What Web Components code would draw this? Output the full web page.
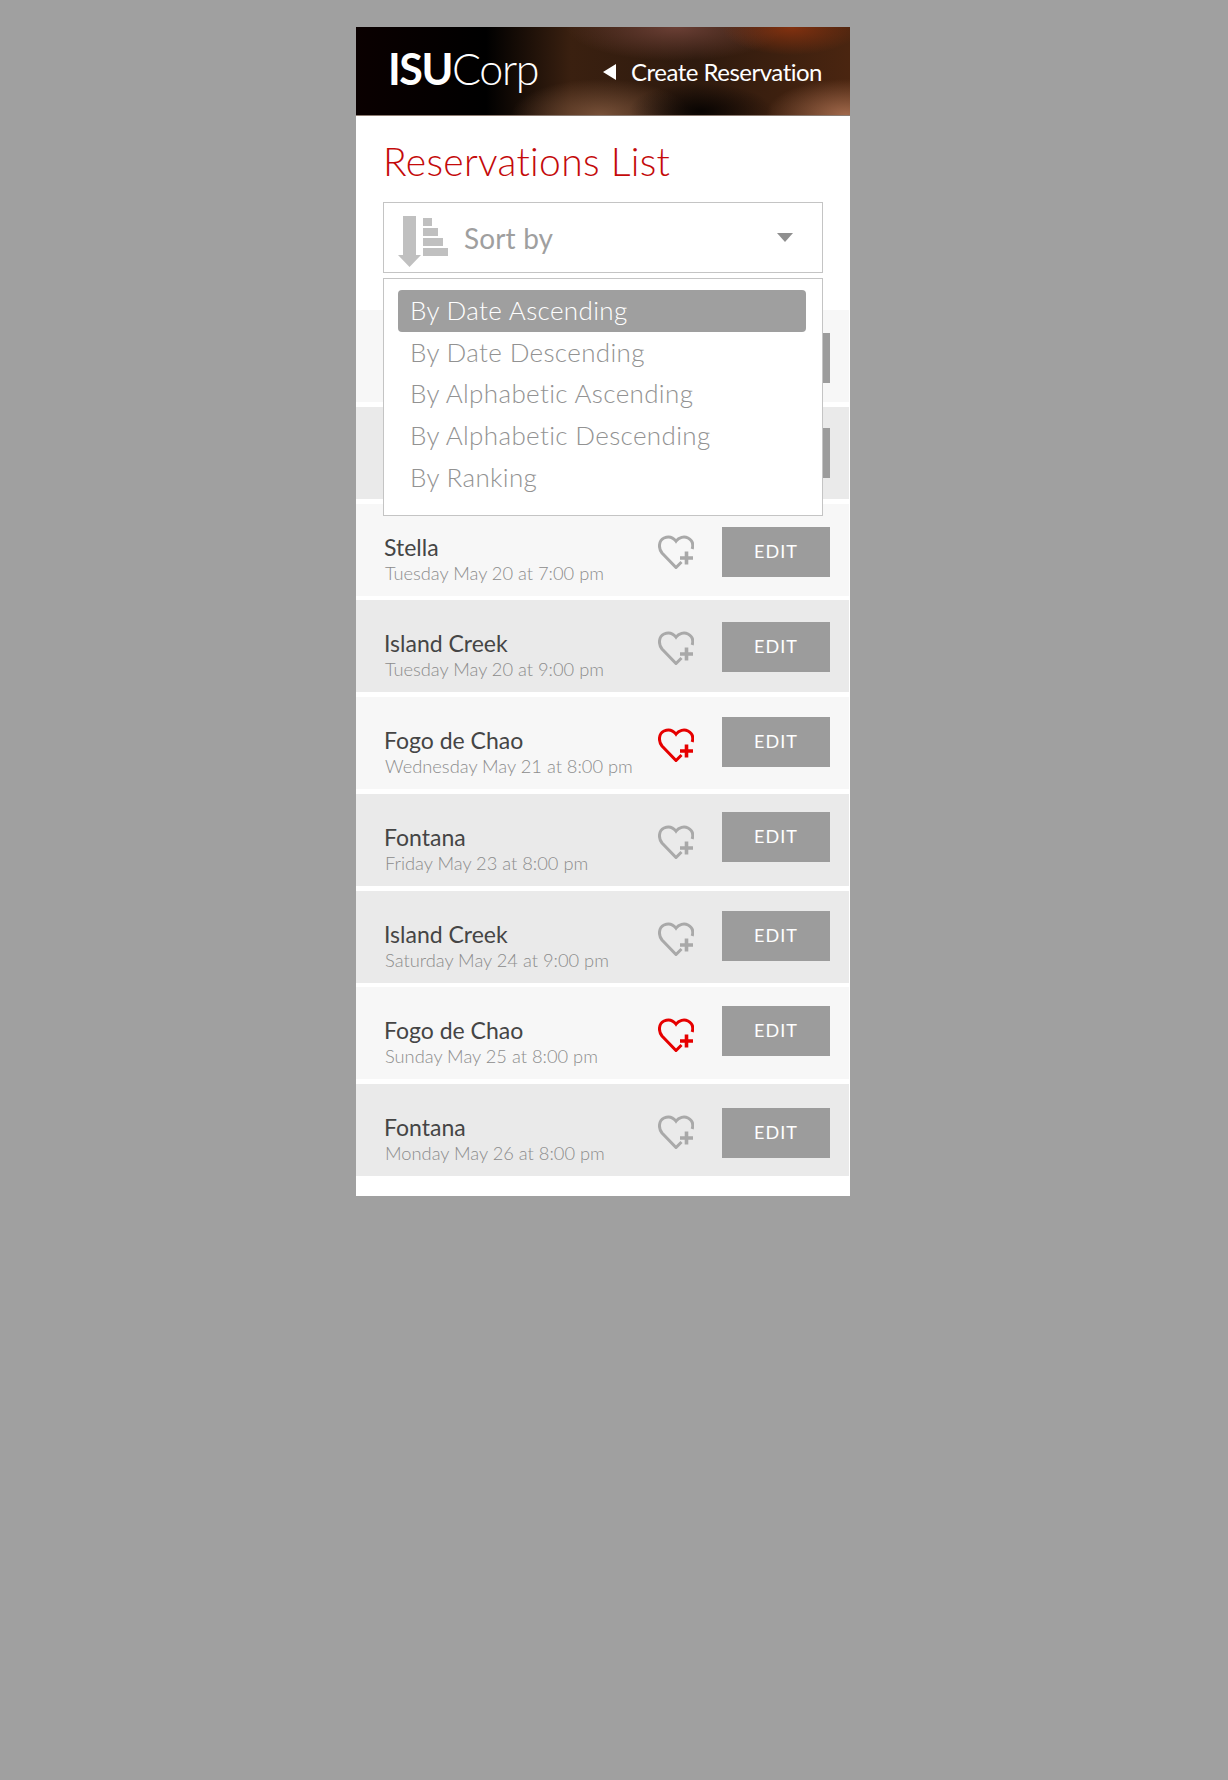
<!DOCTYPE html>
<html>
<head>
<meta charset="utf-8">
<title>Reservations List</title>
<style>
    html, body { margin: 0; background: #a0a0a0; }
    body { min-height: 1780px; font-family: Lato, "Liberation Sans", sans-serif; }
</style>
</head>
<body>
<reservation-screen>
    <app-header slot="header" link="Create Reservation"></app-header>
    <h-title slot="title">Reservations List</h-title>
    <sort-select slot="sort">
        <sort-option selected>By Date Ascending</sort-option>
        <sort-option>By Date Descending</sort-option>
        <sort-option>By Alphabetic Ascending</sort-option>
        <sort-option>By Alphabetic Descending</sort-option>
        <sort-option>By Ranking</sort-option>
    </sort-select>
    <reservation-row btn="23"></reservation-row>
    <reservation-row btn="21" alt></reservation-row>
    <reservation-row btn="23" name="Stella" date="Tuesday May 20 at 7:00 pm"></reservation-row>
    <reservation-row btn="22" alt name="Island Creek" date="Tuesday May 20 at 9:00 pm"></reservation-row>
    <reservation-row btn="20" fav name="Fogo de Chao" date="Wednesday May 21 at 8:00 pm"></reservation-row>
    <reservation-row btn="18" alt name="Fontana" date="Friday May 23 at 8:00 pm"></reservation-row>
    <reservation-row btn="20" alt name="Island Creek" date="Saturday May 24 at 9:00 pm"></reservation-row>
    <reservation-row btn="19" fav name="Fogo de Chao" date="Sunday May 25 at 8:00 pm"></reservation-row>
    <reservation-row btn="24" alt name="Fontana" date="Monday May 26 at 8:00 pm"></reservation-row>
</reservation-screen>

<script>
class ReservationScreen extends HTMLElement {
    constructor() {
        super();
        this.shadow = this.attachShadow({ mode: "open" });
    }

    connectedCallback() {
        this.shadow.innerHTML = `
            <style>
                :host {
                    display: block;
                    width: 494px;
                    margin: 27px 0 0 356px;
                    background: #fff;
                    padding-bottom: 20px;
                }
                .top {
                    display: flex;
                    flex-direction: column;
                    padding: 0 27px 37px;
                }
                .list {
                    display: grid;
                    gap: 4.75px;
                    margin-right: 1px;
                }
            </style>
            <slot name="header"></slot>
            <div class="top">
                <slot name="title"></slot>
                <slot name="sort"></slot>
            </div>
            <div class="list"><slot></slot></div>
        `;
    }
}

class AppHeader extends HTMLElement {
    constructor() {
        super();
        this.shadow = this.attachShadow({ mode: "open" });
    }

    connectedCallback() {
        this.shadow.innerHTML = `
            <style>
                :host {
                    display: flex;
                    align-items: center;
                    justify-content: space-between;
                    box-sizing: border-box;
                    height: 89px;
                    padding: 0 28px 0 32px;
                    color: #fff;
                    border-bottom: 1px solid #8d7c72;
                    background:
                        radial-gradient(ellipse 72px 28px at 345px 84px, rgba(8,4,2,.98), rgba(8,4,2,0)),
                        radial-gradient(ellipse 80px 36px at 490px 88px, rgba(165,108,78,.95), rgba(165,108,78,0)),
                        radial-gradient(ellipse 90px 36px at 245px 88px, rgba(125,85,60,.9), rgba(125,85,60,0)),
                        radial-gradient(ellipse 70px 28px at 435px 0, rgba(135,50,15,.95), rgba(135,50,15,0)),
                        radial-gradient(ellipse 110px 34px at 320px 0, rgba(110,65,55,.95), rgba(110,65,55,0)),
                        linear-gradient(90deg, #0a0000 0, #000 130px, #3a2010 215px, #2e1a0e 340px, #4a2510 100%);
                }
                .logo { font-size: 43px; font-weight: 300; letter-spacing: -1.4px; line-height: 1; margin-top: -5px; }
                .logo b { font-weight: 700; }
                a {
                    display: flex;
                    align-items: center;
                    gap: 15px;
                    color: inherit;
                    text-decoration: none;
                    font-size: 24px;
                    letter-spacing: -0.5px;
                    margin-top: 1px;
                }
                i {
                    width: 0; height: 0;
                    border-style: solid;
                    border-width: 8px 13px 8px 0;
                    border-color: transparent #fff transparent transparent;
                }
            </style>
            <div class="logo"><b>ISU</b>Corp</div>
            <a href="#"><i></i><span>${this.getAttribute("link")}</span></a>
        `;
    }
}

class HTitle extends HTMLElement {
    constructor() {
        super();
        this.shadow = this.attachShadow({ mode: "open" });
    }

    connectedCallback() {
        this.shadow.innerHTML = `
            <style>
                :host {
                    display: block;
                    height: 86px;
                    color: #c40a0a;
                    font-size: 39px;
                    font-weight: 300;
                    line-height: 90px;
                    letter-spacing: 0.3px;
                }
            </style>
            <slot></slot>
        `;
    }
}

class SortSelect extends HTMLElement {
    constructor() {
        super();
        this.shadow = this.attachShadow({ mode: "open" });
    }

    connectedCallback() {
        this.shadow.innerHTML = `
            <style>
                :host { display: block; position: relative; }
                .box {
                    display: flex;
                    align-items: center;
                    box-sizing: border-box;
                    height: 71px;
                    padding: 0 29px 0 14px;
                    border: 1px solid #c4c4c4;
                    color: #9f9f9f;
                    font-size: 28px;
                    letter-spacing: 0.15px;
                }
                svg { display: block; flex: none; margin-right: 16px; margin-top: 8px; }
                span { flex: 1; }
                i {
                    width: 0; height: 0;
                    border-style: solid;
                    border-width: 9px 8.5px 0;
                    border-color: #8f8f8f transparent transparent;
                }
                .menu {
                    position: absolute;
                    z-index: 2;
                    left: 0;
                    right: 0;
                    top: 76px;
                    box-sizing: border-box;
                    height: 238px;
                    padding: 11px 16px 0 14px;
                    background: #fff;
                    border: 1px solid #c4c4c4;
                }
            </style>
            <div class="box">
                <svg width="50" height="52" viewBox="0 0 50 52" fill="#c0c0c0">
                    <path d="M5 0h13v39h5L11.500 51 0 39h5z"/>
                    <rect x="25" y="2" width="9" height="8"/>
                    <rect x="25" y="12" width="15" height="8"/>
                    <rect x="25" y="22" width="20" height="8"/>
                    <rect x="25" y="32" width="25" height="8"/>
                </svg>
                <span>Sort by</span>
                <i></i>
            </div>
            <div class="menu"><slot></slot></div>
        `;
    }
}

class SortOption extends HTMLElement {
    constructor() {
        super();
        this.shadow = this.attachShadow({ mode: "open" });
    }

    connectedCallback() {
        this.shadow.innerHTML = `
            <style>
                :host {
                    display: block;
                    box-sizing: border-box;
                    height: 41.700px;
                    padding-left: 12px;
                    color: #929292;
                    font-size: 26px;
                    font-weight: 300;
                    line-height: 41px;
                    letter-spacing: 0.35px;
                    border-radius: 4px;
                }
                :host([selected]) { background: #9f9f9f; color: #fff; }
            </style>
            <slot></slot>
        `;
    }
}

class HeartIcon extends HTMLElement {
    constructor() {
        super();
        this.shadow = this.attachShadow({ mode: "open" });
    }

    connectedCallback() {
        this.shadow.innerHTML = `
            <style>
                :host { display: block; width: 36px; height: 34px; color: #a9a9a9; }
                :host([fav]) { color: #e60000; }
                svg { display: block; }
            </style>
            <svg width="36" height="34" viewBox="0 0 36 34" fill="none" stroke="currentColor">
                <path stroke-width="3" d="M23.500 27 18 32.500 4 18C0 13 .8 5.500 6 3c4.500-2 9-.7 12 3.200C21 2.300 26 1 30 3c4.500 2.300 5.500 6.500 4.200 11"/>
                <path stroke-width="3.600" d="M22 23h13M28.500 16.500v13"/>
            </svg>
        `;
    }
}

class ReservationRow extends HTMLElement {
    constructor() {
        super();
        this.shadow = this.attachShadow({ mode: "open" });
    }

    connectedCallback() {
        const name = this.getAttribute("name");
        const date = this.getAttribute("date");
        const fav = this.hasAttribute("fav") ? "fav" : "";

        this.shadow.innerHTML = `
            <style>
                :host {
                    display: flex;
                    align-items: flex-start;
                    box-sizing: border-box;
                    height: 92px;
                    padding: 0 19px 0 28px;
                    background: #f7f7f7;
                }
                :host([alt]) { background: #eaeaea; }
                .text { flex: 1; padding-top: 29px; min-width: 0; }
                .name { color: #454545; font-size: 23px; line-height: 28px; }
                .date { color: #8c8c8c; font-size: 18.300px; font-weight: 300; line-height: 22px; margin-top: 1px; margin-left: 1px; white-space: nowrap; }
                heart-icon { margin-top: 31px; margin-right: 28px; }
                .edit {
                    width: 108px;
                    height: 50px;
                    margin-top: ${this.getAttribute("btn")}px;
                    background: #9c9c9c;
                    color: #fff;
                    font-size: 18px;
                    line-height: 48px;
                    letter-spacing: 1px;
                    text-align: center;
                }
            </style>
            <div class="text">
                ${name ? `<div class="name">${name}</div><div class="date">${date}</div>` : ""}
            </div>
            ${name ? `<heart-icon ${fav}></heart-icon>` : ""}
            <div class="edit">${name ? "EDIT" : ""}</div>
        `;
    }
}

customElements.define("reservation-screen", ReservationScreen);
customElements.define("app-header", AppHeader);
customElements.define("h-title", HTitle);
customElements.define("sort-select", SortSelect);
customElements.define("sort-option", SortOption);
customElements.define("heart-icon", HeartIcon);
customElements.define("reservation-row", ReservationRow);
</script>
</body>
</html>
